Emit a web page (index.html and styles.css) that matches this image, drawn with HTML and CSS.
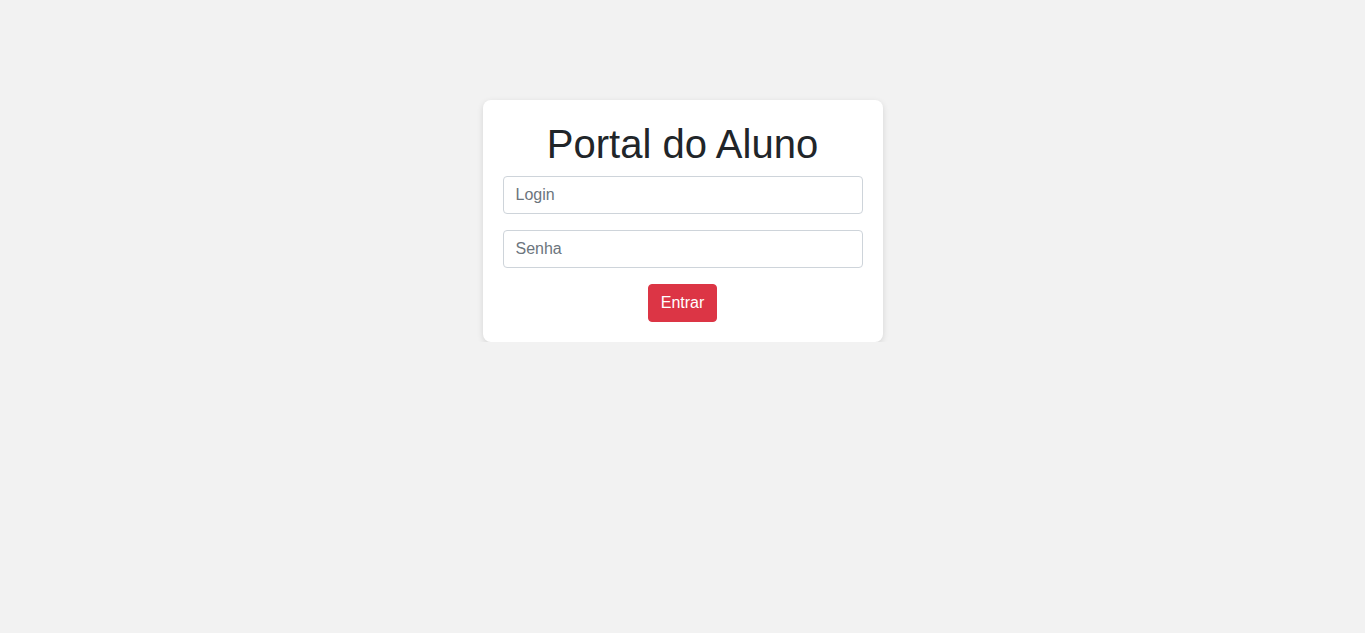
FILE: index.html
```html
<!DOCTYPE html>
<html>
<head>
<meta charset="UTF-8">
<title>Portal do Aluno</title>
<link rel="stylesheet" href="styles.css">
</head>
<body>
	<div class="login-box">
		<h1 class="title">Portal do Aluno</h1>
		<form id="idform" class="login-form">
			<input type="text" class="field" id="idlogin" name="login" placeholder="Login" />
			<input type="password" class="field" id="idsenha" name="senha" placeholder="Senha" />
			<button type="submit" class="btn-entrar">Entrar</button>
		</form>
	</div>
</body>
</html>
```

FILE: styles.css
```css
body {
	margin: 0;
	background-color: #f2f2f2;
	font-family: "Liberation Sans", Arial, sans-serif;
	color: #212529;
}

/* white card in the middle */
.login-box {
	width: 400px;
	box-sizing: border-box;
	margin: 100px auto 0;
	padding: 20px;
	background-color: #ffffff;
	border-radius: 8px;
	box-shadow: 0 2px 6px rgba(0, 0, 0, 0.12);
}

.title {
	margin: 0 0 8px;
	font-size: 40px;
	font-weight: 400;
	line-height: 1.2;
	text-align: center;
}

.login-form {
	display: flex;
	flex-direction: column;
	gap: 16px;
}

.field {
	display: block;
	width: 100%;
	box-sizing: border-box;
	height: 38px;
	padding: 6px 12px;
	font-family: inherit;
	font-size: 16px;
	color: #212529;
	border: 1px solid #ced4da;
	border-radius: 4px;
	outline: none;
}

.field::placeholder {
	color: #6c757d;
}

.btn-entrar {
	align-self: center;
	height: 38px;
	padding: 6px 12px;
	font-family: inherit;
	font-size: 16px;
	color: #ffffff;
	background-color: #dc3545;
	border: 1px solid #dc3545;
	border-radius: 4px;
	cursor: pointer;
}
```
